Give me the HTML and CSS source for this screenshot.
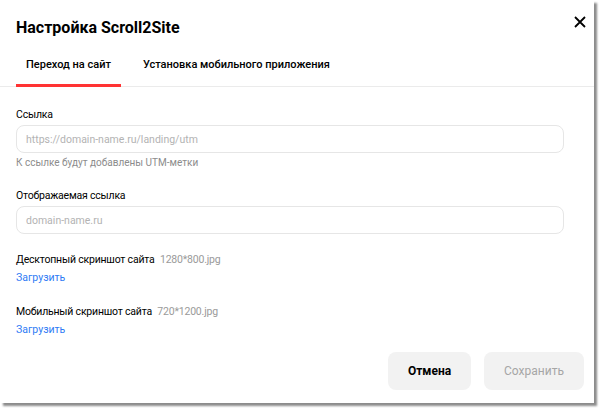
FILE: index.html
```html
<html>
<head>
<meta charset="utf-8">
<link rel="stylesheet" href="styles.css">
</head>
<body>
  <div class="dialog">
    <div class="title">Настройка Scroll2Site</div>
    <a class="close" href="#">
      <svg width="12" height="12" viewBox="0 0 12 12">
        <path d="M1 1 L11 11 M11 1 L1 11" stroke="#000" stroke-width="1.8" fill="none"/>
      </svg>
    </a>

    <div class="tabs">
      <div class="tab active">Переход на сайт</div>
      <div class="tab">Установка мобильного приложения</div>
    </div>

    <div class="form">
      <div class="label first">Ссылка</div>
      <input class="field" type="text" placeholder="https://domain-name.ru/landing/utm">
      <div class="hint">К ссылке будут добавлены UTM-метки</div>

      <div class="label">Отображаемая ссылка</div>
      <input class="field" type="text" placeholder="domain-name.ru">

      <div class="label upload-label">Десктопный скриншот сайта <span class="size">1280*800.jpg</span></div>
      <a class="upload" href="#">Загрузить</a>

      <div class="label upload-label">Мобильный скриншот сайта <span class="size">720*1200.jpg</span></div>
      <a class="upload" href="#">Загрузить</a>
    </div>

    <div class="footer">
      <button class="btn cancel">Отмена</button>
      <button class="btn save" disabled>Сохранить</button>
    </div>
  </div>
</body>
</html>
```
FILE: styles.css
```css
body {
  margin: 0;
  background: #fff;
  font-family: Roboto, "Liberation Sans", sans-serif;
  color: #000;
}

.dialog {
  position: relative;
  width: 594px;
  height: 403px;
  background: #fff;
  box-shadow: 3px 3px 2px #8c8c8c;
}

.title {
  padding: 16px 16px 0;
  font-size: 16px;
  line-height: 24px;
  font-weight: 700;
}

.close {
  position: absolute;
  top: 16px;
  right: 8px;
  width: 12px;
  height: 12px;
  display: block;
}
.close svg {
  display: block;
}

.tabs {
  display: flex;
  gap: 12px;
  padding-left: 16px;
  border-bottom: 1px solid #ebebeb;
}
.tab {
  padding: 17px 10px 11px;
  font-size: 11px;
  line-height: 16px;
  font-weight: 500;
  border-bottom: 3px solid transparent;
  margin-bottom: -1px;
}
.tab.active {
  border-bottom-color: #ff3333;
}

.form {
  padding: 0 30px 0 16px;
}
.label {
  margin-top: 18px;
  font-size: 10.5px;
  letter-spacing: -0.2px;
  line-height: 16px;
}
.label.first {
  margin-top: 20px;
}
.size {
  color: #9a9a9a;
  margin-left: 3px;
}

.field {
  display: block;
  box-sizing: border-box;
  width: 100%;
  height: 28px;
  margin-top: 2px;
  padding: 0 9px;
  border: 1px solid #e6e6e6;
  border-radius: 8px;
  font-family: inherit;
  font-size: 10.5px;
  color: #000;
  outline: none;
}
.field::placeholder {
  color: #b3b3b3;
}

.hint {
  margin-top: 3px;
  font-size: 10px;
  line-height: 14px;
  color: #8c8c8c;
}

.upload {
  display: block;
  margin-top: 2px;
  font-size: 10.5px;
  line-height: 16px;
  color: #2e7bf5;
  text-decoration: none;
}

.footer {
  display: flex;
  justify-content: flex-end;
  gap: 13px;
  padding: 14px 10px 0 0;
}
.btn {
  height: 38px;
  border: none;
  border-radius: 8px;
  background: #f2f2f2;
  font-family: inherit;
  font-size: 12px;
}
.btn.cancel {
  width: 83px;
  font-weight: 700;
  color: #000;
}
.btn.save {
  width: 100px;
  color: #a6a6a6;
}
```
